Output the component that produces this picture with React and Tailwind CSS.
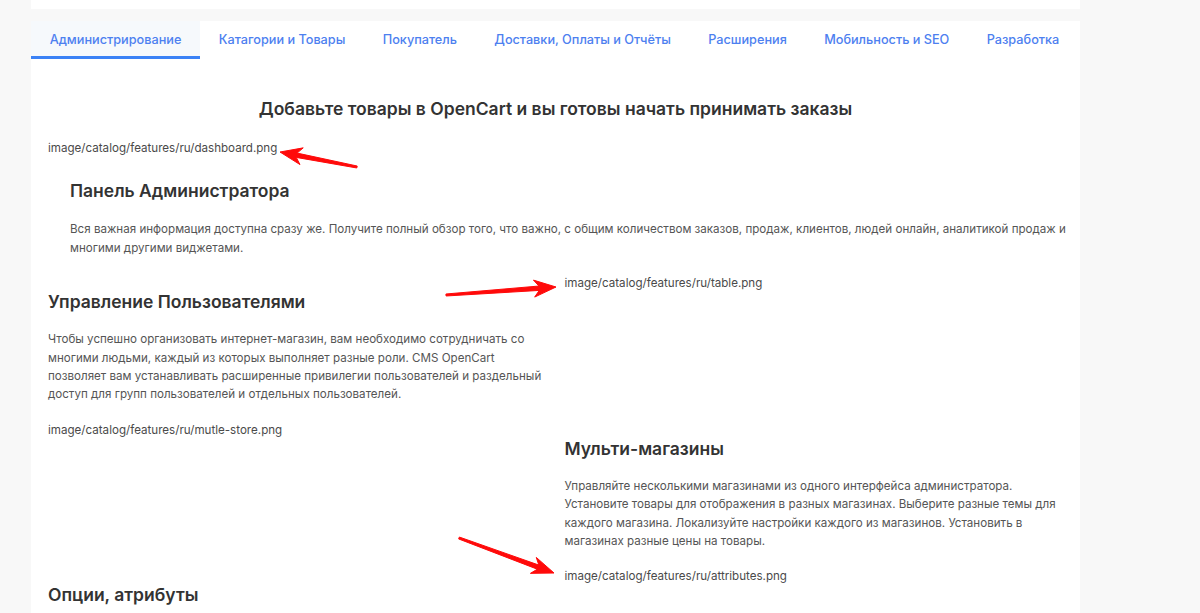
const tabs = [
  'Администрирование',
  'Катагории и Товары',
  'Покупатель',
  'Доставки, Оплаты и Отчёты',
  'Расширения',
  'Мобильность и SEO',
  'Разработка',
];

// red hand-drawn annotation arrows, page coordinates
const arrows = [
  { from: [357, 167], to: [280, 152] },
  { from: [446, 295], to: [556, 287] },
  { from: [459, 538], to: [554, 573] },
];

const arrowPoints = ({ from, to }) => {
  const dx = to[0] - from[0];
  const dy = to[1] - from[1];
  const len = Math.hypot(dx, dy);
  const ux = dx / len;
  const uy = dy / len;
  const nx = -uy;
  const ny = ux;
  const bx = to[0] - ux * 20;
  const by = to[1] - uy * 20;
  const pts = [
    [from[0] + nx * 1, from[1] + ny * 1],
    [bx + ux * 3 + nx * 2.2, by + uy * 3 + ny * 2.2],
    [bx - ux * 2 + nx * 8.5, by - uy * 2 + ny * 8.5],
    [to[0], to[1]],
    [bx - ux * 2 - nx * 8.5, by - uy * 2 - ny * 8.5],
    [bx + ux * 3 - nx * 2.2, by + uy * 3 - ny * 2.2],
    [from[0] - nx * 1, from[1] - ny * 1],
  ];
  return pts.map((p) => p.join(',')).join(' ');
};

const ImageName = ({ name }) => (
  <div className="text-[11.6px] leading-[18px] text-[#4a4a4a]">
    image/catalog/features/ru/{name}
  </div>
);

const Feature = ({ title, children }) => (
  <div>
    <h3 className="mt-[16px] text-[17.5px] leading-[24px] font-semibold text-[#333]">{title}</h3>
    <p className="mt-[16px] text-[11.6px] leading-[18.4px] text-[#555]">{children}</p>
  </div>
);

export default function App() {
  return (
    <div className="relative h-[613px] overflow-hidden bg-[#f8f8f8] font-['Inter',sans-serif]">
      <div className="ml-[31px] w-[1049px]">
        <div className="h-[9px] bg-white" />
        <div className="mt-[12px] bg-white pb-10">
          {/* TABS */}
          <div className="flex h-[38px]">
            {tabs.map((t, i) => (
              <div
                key={t}
                className={`flex items-center whitespace-nowrap px-[18.7px] text-[12.7px] font-medium text-[#4d80f0] ${
                  i === 0 ? 'bg-[#f6f9fc] border-b-[3px] border-[#3b82f6] pt-[3px]' : ''
                }`}
              >
                {t}
              </div>
            ))}
          </div>

          <div className="px-[17px]">
            <h2 className="mt-[38px] text-center text-[17.5px] leading-[24px] font-semibold text-[#333]">
              Добавьте товары в OpenCart и вы готовы начать принимать заказы
            </h2>

            <div className="mt-[18px]">
              <ImageName name="dashboard.png" />
            </div>

            <div className="-mr-[8px] pl-[22px]">
              <h3 className="mt-[22px] text-[17.5px] leading-[24px] font-semibold text-[#333]">Панель Администратора</h3>
              <p className="mt-[17px] text-[11.6px] leading-[18.6px] text-[#555]">
                Вся важная информация доступна сразу же. Получите полный обзор того, что важно, с общим количеством заказов, продаж, клиентов, людей онлайн, аналитикой продаж и многими другими виджетами.
              </p>
            </div>

            {/* ROWS */}
            <div className="mt-[17px] grid grid-cols-2 gap-x-[18px]">
              <div className="pb-[17px]">
                <Feature title="Управление Пользователями">
                  Чтобы успешно организовать интернет-магазин, вам необходимо сотрудничать со многими людьми, каждый из которых выполняет разные роли. CMS OpenCart позволяет вам устанавливать расширенные привилегии пользователей и раздельный доступ для групп пользователей и отдельных пользователей.
                </Feature>
              </div>
              <div>
                <ImageName name="table.png" />
              </div>

              <div>
                <ImageName name="mutle-store.png" />
              </div>
              <div className="pb-[17px]">
                <Feature title="Мульти-магазины">
                  Управляйте несколькими магазинами из одного интерфейса администратора. Установите товары для отображения в разных магазинах. Выберите разные темы для каждого магазина. Локализуйте настройки каждого из магазинов. Установить в магазинах разные цены на товары.
                </Feature>
              </div>

              <div className="pb-[17px]">
                <Feature title="Опции, атрибуты">
                  Добавляйте опции и атрибуты к товарам, чтобы покупатели могли выбрать размер, цвет и другие параметры.
                </Feature>
              </div>
              <div>
                <ImageName name="attributes.png" />
              </div>
            </div>
          </div>
        </div>
      </div>

      {/* annotation arrows */}
      <svg className="pointer-events-none absolute left-0 top-0" width="1200" height="613">
        {arrows.map((a, i) => (
          <polygon key={i} points={arrowPoints(a)} fill="#ff0a0a" stroke="#ff0a0a" strokeWidth="1" strokeLinejoin="round" />
        ))}
      </svg>
    </div>
  );
}
